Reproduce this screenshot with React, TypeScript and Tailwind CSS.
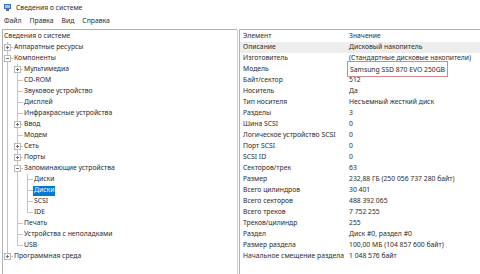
import React from "react";

type Node = { label: string; level: number; exp?: "+" | "-"; last?: boolean; guides?: boolean[]; selected?: boolean };

function Cell({ kind, vert, lastHalf, exp }: { kind: "guide" | "conn"; vert: boolean; lastHalf?: boolean; exp?: "+" | "-" }) {
  return (
    <div className="relative w-[10px] h-full shrink-0">
      {kind === "guide" && vert && <div className="absolute left-[4px] top-0 bottom-0 w-px bg-[#c4c4c4]" />}
      {kind === "conn" && (
        <>
          <div className={`absolute left-[4px] top-0 w-px bg-[#c4c4c4] ${lastHalf ? "h-[6px]" : "bottom-0"}`} />
          <div className="absolute left-[4px] top-[5px] w-[6px] h-px bg-[#c4c4c4]" />
          {exp && (
            <div className="absolute left-[1px] top-[2px] w-[7px] h-[7px] border border-[#b8b8b8] bg-white flex items-center justify-center">
              <div className="relative w-[3px] h-[3px]">
                <div className="absolute left-0 top-[1px] w-[3px] h-px bg-[#707070]" />
                {exp === "+" && <div className="absolute left-[1px] top-0 w-px h-[3px] bg-[#707070]" />}
              </div>
            </div>
          )}
        </>
      )}
    </div>
  );
}

const tree: Node[] = [
  { label: "Аппаратные ресурсы", level: 0, exp: "+", guides: [] },
  { label: "Компоненты", level: 0, exp: "-", guides: [] },
  { label: "Мультимедиа", level: 1, exp: "+", guides: [true] },
  { label: "CD-ROM", level: 1, guides: [true] },
  { label: "Звуковое устройство", level: 1, guides: [true] },
  { label: "Дисплей", level: 1, guides: [true] },
  { label: "Инфракрасные устройства", level: 1, guides: [true] },
  { label: "Ввод", level: 1, exp: "+", guides: [true] },
  { label: "Модем", level: 1, guides: [true] },
  { label: "Сеть", level: 1, exp: "+", guides: [true] },
  { label: "Порты", level: 1, exp: "+", guides: [true] },
  { label: "Запоминающие устройства", level: 1, exp: "-", guides: [true] },
  { label: "Диски", level: 2, guides: [true, true] },
  { label: "Диски", level: 2, guides: [true, true], selected: true },
  { label: "SCSI", level: 2, guides: [true, true] },
  { label: "IDE", level: 2, guides: [true, true], last: true },
  { label: "Печать", level: 1, guides: [true] },
  { label: "Устройства с неполадками", level: 1, guides: [true] },
  { label: "USB", level: 1, guides: [true], last: true },
  { label: "Программная среда", level: 0, exp: "+", guides: [], last: true },
];

const rows: [string, string][] = [
  ["Описание", "Дисковый накопитель"],
  ["Изготовитель", "(Стандартные дисковые накопители)"],
  ["Модель", "Samsung SSD 870 EVO 250GB"],
  ["Байт/сектор", "512"],
  ["Носитель", "Да"],
  ["Тип носителя", "Несъемный жесткий диск"],
  ["Разделы", "3"],
  ["Шина SCSI", "0"],
  ["Логическое устройство SCSI", "0"],
  ["Порт SCSI", "0"],
  ["SCSI ID", "0"],
  ["Секторов/трек", "63"],
  ["Размер", "232,88 ГБ (250 056 737 280 байт)"],
  ["Всего цилиндров", "30 401"],
  ["Всего секторов", "488 392 065"],
  ["Всего треков", "7 752 255"],
  ["Треков/цилиндр", "255"],
  ["Раздел", "Диск #0, раздел #0"],
  ["Размер раздела", "100,00 МБ (104 857 600 байт)"],
  ["Начальное смещение раздела", "1 048 576 байт"],
];

export default function App() {
  return (
    <div
      className="w-[480px] h-[274px] bg-white overflow-hidden text-[6.8px] text-[#2a2a2a] leading-none flex flex-col"
      style={{ fontFamily: '"Noto Sans", "Open Sans", sans-serif' }}
    >
      {/* title bar */}
      <div className="h-[15px] flex items-center pl-[4px] gap-[5px] shrink-0">
        <svg width="7" height="7" viewBox="0 0 7 7">
          <rect x="0" y="0" width="7" height="5" fill="#3a6fb5" />
          <rect x="1" y="1" width="5" height="3" fill="#9cc3ee" />
          <rect x="2" y="5" width="3" height="2" fill="#6b6b6b" />
        </svg>
        <span className="pt-[1px]">Сведения о системе</span>
      </div>
      {/* menu */}
      <div className="h-[13px] flex items-center pl-[4px] gap-[8px] shrink-0">
        <span>Файл</span>
        <span>Правка</span>
        <span>Вид</span>
        <span>Справка</span>
      </div>
      {/* main */}
      <div className="flex flex-1 min-h-0 pt-[1px]">
        <div className="w-[235px] ml-[2px] border-l border-t border-[#b0b0b0] pt-[1px] shrink-0">
          <div className="h-[11px] flex items-center pl-[1px]">Сведения о системе</div>
          {tree.map((n, i) => (
            <div key={i} className="h-[11px] flex">
              {(n.guides || []).map((g, j) => (
                <Cell key={j} kind="guide" vert={g} />
              ))}
              <Cell kind="conn" vert lastHalf={n.last} exp={n.exp} />
              <div className="flex items-center">
                <span className={n.selected ? "bg-[#0078d7] text-white px-[1px] h-[10px] flex items-center" : "px-[1px]"}>{n.label}</span>
              </div>
            </div>
          ))}
        </div>
        <div className="w-[2px] shrink-0" />
        <div className="flex-1 border-l border-t border-[#b0b0b0] relative">
          <div className="absolute left-[-3px] top-0 bottom-0 w-px bg-[#d0d0d0]" />
          <div className="pt-[1px]">
            <div className="h-[11px] flex items-center">
              <div className="w-[107px] pl-[3px]">Элемент</div>
              <div className="pl-[2px]">Значение</div>
            </div>
            {rows.map(([k, v], i) => (
              <div key={i} className={`h-[11px] flex items-center ${i === 0 ? "bg-[#ededed]" : ""}`}>
                <div className="w-[107px] pl-[3px] whitespace-nowrap">{k}</div>
                <div className="pl-[2px] whitespace-nowrap">
                  {i === 2 ? (
                    <span className="border border-[#d08a8c] px-[2px] py-[2.5px] -ml-[2px]">{v}</span>
                  ) : (
                    v
                  )}
                </div>
              </div>
            ))}
          </div>
        </div>
      </div>
    </div>
  );
}
